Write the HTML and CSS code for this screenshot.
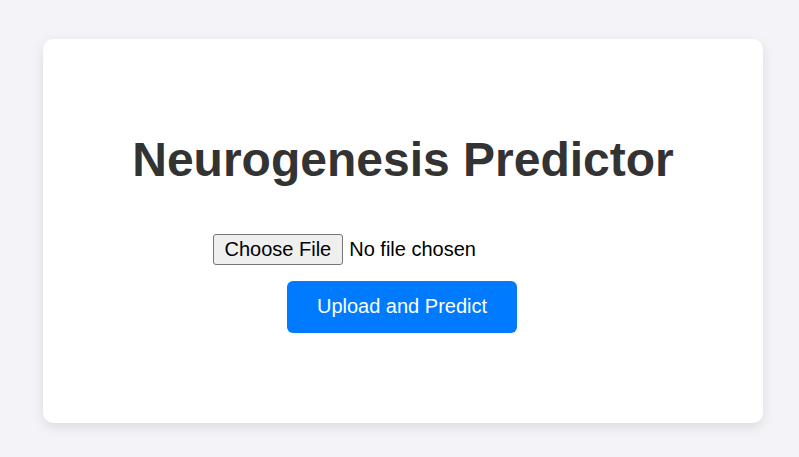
FILE: index.html
```html
<!DOCTYPE html>
<html>
<head>
<meta charset="utf-8">
<link rel="stylesheet" href="styles.css">
</head>
<body>
<div class="card">
  <h1 class="title">Neurogenesis Predictor</h1>
  <form class="form">
    <input class="file" type="file">
    <button class="btn" type="button">Upload and Predict</button>
  </form>
</div>
</body>
</html>
```
FILE: styles.css
```css
html, body { margin: 0; padding: 0; }
body {
  background: #f4f4f8;
  font-family: "Liberation Sans", Arial, sans-serif;
  width: 799px;
  height: 457px;
  overflow: hidden;
}
.card {
  box-sizing: border-box;
  margin: 39px 0 0 43px;
  width: 720px;
  height: 384px;
  background: #fff;
  border-radius: 10px;
  box-shadow: 0 4px 12px rgba(0,0,0,0.1);
  padding: 93px 40px 0;
  text-align: center;
}
.title {
  margin: 0 0 47px;
  font-size: 48px;
  font-weight: bold;
  color: #333;
  line-height: 55px;
}
.form {
  display: flex;
  flex-direction: column;
  align-items: center;
  gap: 16px;
}
.file {
  font-family: "Liberation Sans", Arial, sans-serif;
  font-size: 20px;
  line-height: 23px;
  color: #000;
  margin-left: -2px;
}
.file::file-selector-button {
  font-family: "Liberation Sans", Arial, sans-serif;
  font-size: 20px;
  line-height: 23px;
  padding: 3px 11px;
  margin-right: 6px;
  border: 1px solid #767676;
  border-radius: 3px;
  background: #efefef;
  color: #000;
}
.btn {
  font-family: "Liberation Sans", Arial, sans-serif;
  font-size: 20px;
  line-height: 23px;
  color: #fff;
  background: #007bff;
  border: none;
  border-radius: 6px;
  padding: 14px 30px 15px;
  margin-left: -2px;
}
```
